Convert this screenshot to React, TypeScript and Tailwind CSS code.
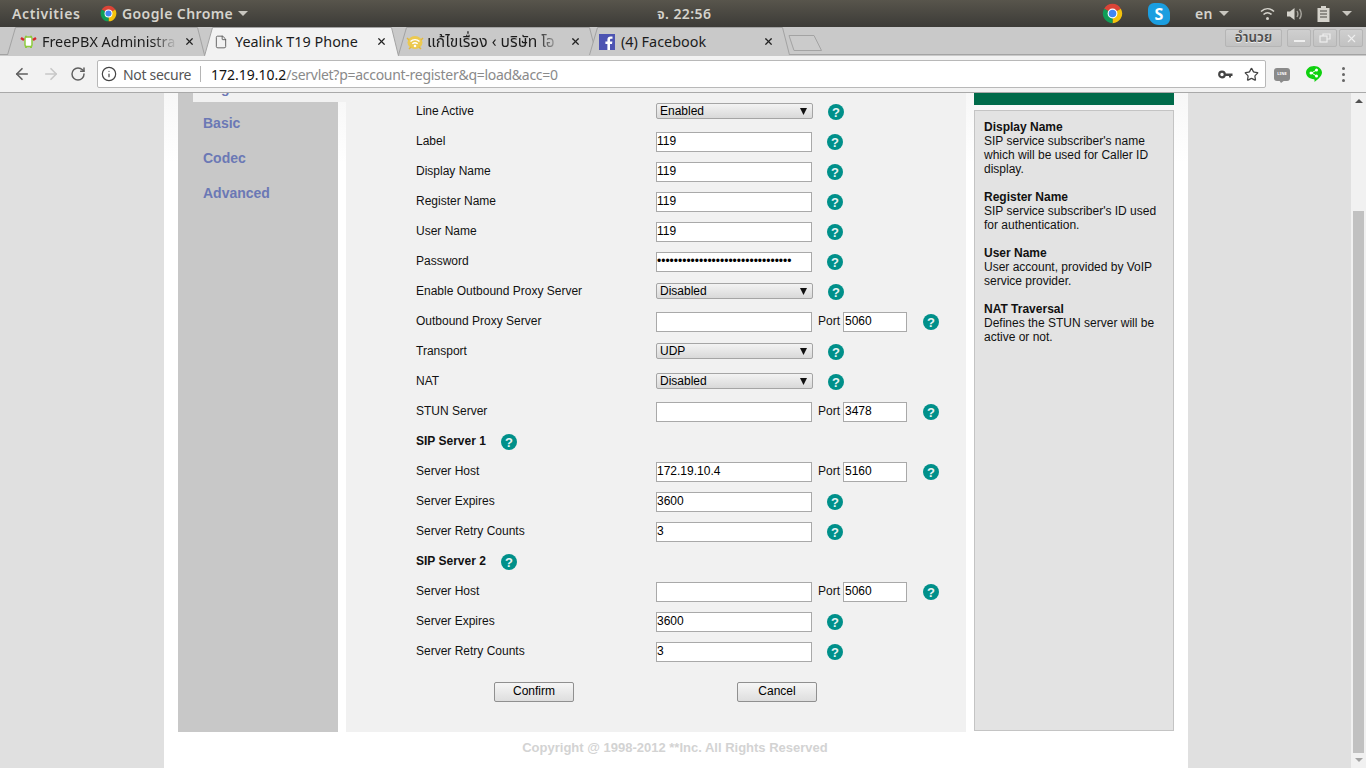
import { ArrowLeft, ArrowRight, File, Info, RotateCw, Star, X } from "lucide-react";
import type { ReactNode } from "react";

const uiFont = "font-['Noto_Sans','Noto_Sans_Thai','Loma',sans-serif]";

// เส้นขอบแท็บ คำนวณจากความกว้าง
const TabShape = ({ width, active }: { width: number; active?: boolean }) => (
  <svg className="absolute inset-0" width={width} height={29} viewBox={`0 0 ${width} 29`}>
    <path
      d={`M0.5 ${active ? 29 : 28} L8.5 0.5 L${width - 7.5} 0.5 L${width - 0.5} ${active ? 29 : 28}`}
      fill={active ? "#f2f2f2" : "#c9c9c9"}
      stroke="#a3a3a3"
    />
  </svg>
);

const ChromeLogo = ({ size }: { size: number }) => (
  <svg width={size} height={size} viewBox="0 0 24 24">
    <path d="M12 12 L2.47 6.5 A11 11 0 0 1 21.53 6.5Z" fill="#db4437" />
    <path d="M12 12 L21.53 6.5 A11 11 0 0 1 12 23Z" fill="#f4c20d" />
    <path d="M12 12 L12 23 A11 11 0 0 1 2.47 6.5Z" fill="#0f9d58" />
    <circle cx="12" cy="12" r="5.6" fill="#fff" />
    <circle cx="12" cy="12" r="4.3" fill="#4285f4" />
  </svg>
);

const Caret = () => (
  <svg width="10" height="5" viewBox="0 0 10 5">
    <path d="M0 0H10L5 5Z" fill="#c8c6bf" />
  </svg>
);

const TopBar = () => (
  <div className={`flex h-[27px] shrink-0 items-center bg-gradient-to-b from-[#58554c] to-[#3c3b37] text-[14px] font-semibold tracking-[0.4px] text-[#d5d3cc] ${uiFont}`}>
    <span className="ml-[12px] w-[88px] tracking-[0.6px]">Activities</span>
    <ChromeLogo size={17} />
    <span className="ml-[5px] w-[116px]">Google Chrome</span>
    <Caret />
    <span className="ml-[409px] w-[60px]">จ. 22:56</span>
    <div className="ml-[385px]">
      <ChromeLogo size={21} />
    </div>
    <div className="ml-[25px] flex h-[22px] w-[22px] items-center justify-center rounded-bl-[11px] rounded-br-[6px] rounded-tl-[6px] rounded-tr-[11px] bg-[#1b9ee0] text-[16px] font-bold text-white">S</div>
    <span className="ml-[25px]">en</span>
    <div className="ml-[6px]">
      <Caret />
    </div>
    <svg className="ml-[31px]" width="15" height="14" viewBox="0 0 15 14" fill="none" stroke="#d5d3cc" strokeWidth="1.6">
      <path d="M1 4.5C5 .8 10 .8 14 4.5" />
      <path d="M3.5 7.5C6 5.3 9 5.3 11.5 7.5" />
      <circle cx="7.5" cy="11.5" r="1.5" fill="#d5d3cc" stroke="none" />
    </svg>
    <svg className="ml-[12px]" width="16" height="14" viewBox="0 0 16 14">
      <path d="M0 4.5H3L7.5 1V13L3 9.5H0Z" fill="#d5d3cc" />
      <path d="M10 4C11.2 6 11.2 8 10 10M12.5 2C14.6 5 14.6 9 12.5 12" fill="none" stroke="#a8a69f" strokeWidth="1.4" />
    </svg>
    <svg className="ml-[14px]" width="13" height="16" viewBox="0 0 13 16">
      <path d="M4 0H9V2H12.5V16H.5V2H4Z" fill="#d5d3cc" />
      <path d="M3 5H10M3 8H10M3 11H10" stroke="#4a4842" strokeWidth="1.2" />
    </svg>
    <div className="ml-[12px]">
      <Caret />
    </div>
  </div>
);

interface TabProps {
  width: number;
  icon: ReactNode;
  title: string;
  active?: boolean;
  fade?: boolean;
  padLeft: number;
  iconGap: number;
  textWidth: number;
  closeRight: number;
  className?: string;
  titleClass?: string;
}

const Tab = ({ width, icon, title, active, fade, padLeft, iconGap, textWidth, closeRight, className, titleClass }: TabProps) => (
  <div className={`relative h-[29px] shrink-0 ${active ? "z-10" : ""} ${className ?? ""}`} style={{ width }}>
    <TabShape width={width} active={active} />
    <div className="relative flex h-[29px] items-center" style={{ paddingLeft: padLeft }}>
      <div className="flex w-[18px] shrink-0 justify-center">{icon}</div>
      <span
        className={`overflow-hidden whitespace-nowrap text-[#1c1c1c] ${titleClass ?? "text-[14.4px]"} ${fade ? "[mask-image:linear-gradient(to_right,#000_82%,transparent)]" : ""}`}
        style={{ marginLeft: iconGap, width: textWidth }}
      >
        {title}
      </span>
      <X className="absolute top-[9px] text-[#222]" style={{ right: closeRight }} size={11} strokeWidth={2.6} />
    </div>
  </div>
);

const WinButton = ({ children, w }: { children: ReactNode; w: string }) => (
  <div className={`flex h-[18px] items-center justify-center rounded-[2px] border border-[#b5b5b5] bg-gradient-to-b from-[#cfcfcf] to-[#c2c2c2] ${w}`}>
    {children}
  </div>
);

const TabStrip = () => (
  <div className={`relative flex h-[29px] shrink-0 items-start bg-[#c9c9c9] pl-[7px] ${uiFont}`}>
    <div className="absolute inset-x-0 bottom-[1px] h-px bg-[#a3a3a3]" />
    <Tab
      width={198}
      title="FreePBX Administra"
      fade
      padLeft={12}
      iconGap={5}
      textWidth={135}
      closeRight={10}
      icon={
        <svg width="17" height="13" viewBox="0 0 17 13">
          <rect x="5" y="2" width="7" height="9.500" rx="1.500" fill="#fff" stroke="#8ecb3e" strokeWidth="1.500" />
          <path d="M5 1.500H7M10 1.500H12M5 12.500H7M10 12.500H12" stroke="#8ecb3e" strokeWidth="1.500" />
          <path d="M1 3L4 5M16 3L13 5" stroke="#d8262c" strokeWidth="2.400" />
        </svg>
      }
    />
    <Tab
      width={195}
      className="-ml-[1px]"
      title="Yealink T19 Phone"
      active
      padLeft={8}
      iconGap={5}
      textWidth={128}
      closeRight={12}
      icon={<File className="text-[#555]" size={14} strokeWidth={1.5} />}
    />
    <Tab
      width={199}
      className="-ml-[1px]"
      title="แก้ไขเรื่อง ‹ บริษัท โอ"
      fade
      padLeft={8}
      iconGap={3}
      textWidth={134}
      closeRight={16}
      titleClass="text-[15.600px]"
      icon={
        <svg width="18" height="16" viewBox="0 0 18 16">
          <ellipse cx="9" cy="8.500" rx="7.500" ry="6.500" fill="#ecc94f" />
          <path d="M1 4L3 6M17 4L15 6M3 15L5 13M15 15L13 13" stroke="#e3b93c" strokeWidth="1.500" />
          <path d="M4.500 7.500C7 5 11 5 13.500 7.500M6.300 9.800C8 8.500 10 8.500 11.700 9.800" fill="none" stroke="#fff" strokeWidth="1.400" />
          <circle cx="9" cy="12" r="1.300" fill="#fff" />
        </svg>
      }
    />
    <Tab
      width={201}
      className="-ml-[8px]"
      title="(4) Facebook"
      padLeft={9}
      iconGap={5}
      textWidth={120}
      closeRight={16}
      icon={
        <svg width="16" height="16" viewBox="0 0 16 16">
          <rect width="16" height="16" fill="#4d54b2" />
          <path d="M11 16V10H13L13.4 7.5H11V6C11 5.2 11.3 4.8 12.2 4.8H13.5V2.6C13 2.5 12.3 2.5 11.6 2.5C9.7 2.5 8.4 3.6 8.4 5.7V7.5H6.4V10H8.4V16Z" fill="#fff" />
        </svg>
      }
    />
    <svg className="-ml-[2px] mt-[7px] shrink-0" width="35" height="18" viewBox="0 0 35 18">
      <path d="M1 1.5H26L33.5 16.5H6Z" fill="#cbcbcb" stroke="#a3a3a3" strokeLinejoin="round" />
    </svg>
    <div className="ml-auto mr-[3px] mt-[2px] flex gap-[2px]">
      <WinButton w="w-[57px] mr-[3px]">
        <span className="text-[13.500px] font-semibold leading-none text-[#4d4d4d] [text-shadow:0_1px_0_#eee]">อำนวย</span>
      </WinButton>
      <WinButton w="w-[24px]">
        <div className="mt-[6px] h-[2px] w-[11px] bg-[#eee]" />
      </WinButton>
      <WinButton w="w-[24px]">
        <svg width="12" height="10" viewBox="0 0 12 10" fill="none" stroke="#eee" strokeWidth="1.2">
          <rect x="1" y="3" width="7" height="6" />
          <path d="M4 3V1H11V6H8" />
        </svg>
      </WinButton>
      <WinButton w="w-[24px]">
        <X className="text-[#eee]" size={13} strokeWidth={2} />
      </WinButton>
    </div>
  </div>
);

const Toolbar = () => (
  <div className={`flex h-[37px] shrink-0 items-center border-b border-[#a9a9a9] bg-[#f2f2f2] ${uiFont}`}>
    <ArrowLeft className="ml-[13px] text-[#5f5f5f]" size={18} strokeWidth={2.2} />
    <ArrowRight className="ml-[11px] text-[#c8c8c8]" size={18} strokeWidth={2.2} />
    <RotateCw className="ml-[10px] text-[#5f5f5f]" size={16} strokeWidth={2.2} />
    <div className="ml-[11px] flex h-[28px] w-[1169px] items-center rounded-[2px] border border-[#b8b8b8] bg-white text-[14px]">
      <Info className="ml-[3px] text-[#444]" size={16} strokeWidth={1.8} />
      <span className="ml-[6px] w-[69px] whitespace-nowrap tracking-[-0.3px] text-[#555]">Not secure</span>
      <div className="ml-[8px] h-[16px] w-px bg-[#b5b5b5]" />
      <span className="ml-[10px] whitespace-nowrap text-[#111]">172.19.10.2</span>
      <span className="whitespace-nowrap tracking-[-0.28px] text-[#8a8a8a]">/servlet?p=account-register&amp;q=load&amp;acc=0</span>
      <svg className="ml-auto" width="15" height="9" viewBox="0 0 15 9">
        <circle cx="4" cy="4.5" r="2.8" fill="none" stroke="#444" strokeWidth="2.2" />
        <path d="M7 3.5H14.5V6H13V7.5H11V6H7Z" fill="#444" />
      </svg>
      <Star className="ml-[11px] mr-[6px] text-[#444]" size={15} strokeWidth={2} />
    </div>
    <div className="relative ml-[8px]">
      <div className="flex h-[13px] w-[16px] items-center justify-center rounded-[3px] bg-[#8a8a8a] text-[4px] font-bold text-white">LINE</div>
      <svg className="absolute left-[5px] top-[12px]" width="6" height="3" viewBox="0 0 6 3">
        <path d="M0 0H6L2 3Z" fill="#8a8a8a" />
      </svg>
    </div>
    <svg className="ml-[16px]" width="16" height="16" viewBox="0 0 16 16">
      <path d="M8 0C12.4 0 16 2.9 16 6.6C16 10.2 11.5 14 8.5 16C8.7 14.5 8.6 13.2 8 13.2C3.6 13.2 0 10.300 0 6.600C0 2.900 3.600 0 8 0Z" fill="#0fd10f" />
      <path d="M5.500 7L10.500 4M5.500 7L10.500 10" stroke="#fff" strokeWidth="1" />
      <circle cx="5" cy="7" r="1.500" fill="#fff" />
      <circle cx="10.500" cy="4" r="1.500" fill="#fff" />
      <circle cx="10.500" cy="10" r="1.500" fill="#fff" />
    </svg>
    <div className="ml-[20px] flex flex-col gap-[3px]">
      <div className="h-[3px] w-[3px] rounded-full bg-[#666]" />
      <div className="h-[3px] w-[3px] rounded-full bg-[#666]" />
      <div className="h-[3px] w-[3px] rounded-full bg-[#666]" />
    </div>
  </div>
);

const Help = ({ className }: { className?: string }) => (
  <div className={`flex h-[16px] w-[16px] shrink-0 items-center justify-center rounded-full bg-[#00908a] text-[13px] font-bold leading-none text-[#e8f5f4] ${className ?? ""}`}>
    ?
  </div>
);

const TextBox = ({ value, type, w }: { value?: string; type?: string; w: string }) => (
  <input
    type={type ?? "text"}
    defaultValue={value}
    className={`mt-[2px] h-[20px] border border-[#a9a9a9] bg-white pb-[2px] text-[12px] text-black outline-none ${w}`}
  />
);

const SelectBox = ({ value }: { value: string }) => (
  <div className="relative h-[16px] w-[157px]">
    <select
      defaultValue={value}
      className="block h-[16px] w-full appearance-none rounded-[2px] border border-[#a5a5a5] bg-gradient-to-b from-[#f3f3f3] to-[#d9d9d9] pb-[1px] pl-[3px] text-[12px] leading-none text-black outline-none"
    >
      <option>{value}</option>
    </select>
    <svg className="absolute right-[6px] top-[5px]" width="7" height="7" viewBox="0 0 7 7">
      <path d="M0 0H7L3.500 7Z" fill="#111" />
    </svg>
  </div>
);

const Row = ({ label, children }: { label: string; children: ReactNode }) => (
  <div className="flex h-[30px] items-center">
    <span className="w-[240px] shrink-0">{label}</span>
    {children}
  </div>
);

const InputRow = ({ label, value, type }: { label: string; value?: string; type?: string }) => (
  <Row label={label}>
    <TextBox value={value} type={type} w="w-[156px]" />
    <Help className="ml-[15px] mt-[2px]" />
  </Row>
);

const SelectRow = ({ label, value }: { label: string; value: string }) => (
  <Row label={label}>
    <SelectBox value={value} />
    <Help className="ml-[15px] mt-[2px]" />
  </Row>
);

const PortRow = ({ label, host, port }: { label: string; host?: string; port: string }) => (
  <Row label={label}>
    <TextBox value={host} w="w-[156px]" />
    <span className="ml-[6px] w-[25px]">Port</span>
    <TextBox value={port} w="w-[64px] pl-[1px]" />
    <Help className="ml-[16px] mt-[2px]" />
  </Row>
);

const SectionRow = ({ label }: { label: string }) => (
  <div className="flex h-[30px] items-center">
    <span className="w-[85px] shrink-0 font-bold">{label}</span>
    <Help className="mt-[2px]" />
  </div>
);

const ActionButton = ({ children }: { children: string }) => (
  <button className="h-[20px] w-[80px] rounded-[2px] border border-[#909090] bg-gradient-to-b from-[#f6f6f6] to-[#dedede] pb-[2px] text-[12px] leading-none text-black">
    {children}
  </button>
);

const AccountForm = () => (
  <main className="h-[639px] w-[620px] shrink-0 bg-[#f1f1f1] pl-[70px] pt-[3px] text-[12px] text-[#111]">
    <SelectRow label="Line Active" value="Enabled" />
    <InputRow label="Label" value="119" />
    <InputRow label="Display Name" value="119" />
    <InputRow label="Register Name" value="119" />
    <InputRow label="User Name" value="119" />
    <InputRow label="Password" type="password" value="12345678901234567890123456789012" />
    <SelectRow label="Enable Outbound Proxy Server" value="Disabled" />
    <PortRow label="Outbound Proxy Server" port="5060" />
    <SelectRow label="Transport" value="UDP" />
    <SelectRow label="NAT" value="Disabled" />
    <PortRow label="STUN Server" port="3478" />
    <SectionRow label="SIP Server 1" />
    <PortRow label="Server Host" host="172.19.10.4" port="5160" />
    <InputRow label="Server Expires" value="3600" />
    <InputRow label="Server Retry Counts" value="3" />
    <SectionRow label="SIP Server 2" />
    <PortRow label="Server Host" port="5060" />
    <InputRow label="Server Expires" value="3600" />
    <InputRow label="Server Retry Counts" value="3" />
    <div className="ml-[78px] mt-[16px] flex gap-[163px]">
      <ActionButton>Confirm</ActionButton>
      <ActionButton>Cancel</ActionButton>
    </div>
  </main>
);

const helpItems = [
  { title: "Display Name", text: "SIP service subscriber's name which will be used for Caller ID display." },
  { title: "Register Name", text: "SIP service subscriber's ID used for authentication." },
  { title: "User Name", text: "User account, provided by VoIP service provider." },
  { title: "NAT Traversal", text: "Defines the STUN server will be active or not." },
];

const HelpPanel = () => (
  <aside className="ml-[8px] flex h-[638px] w-[200px] shrink-0 flex-col">
    <div className="h-[12px] shrink-0 bg-[#006b4a]" />
    <div className="mt-[5px] flex flex-1 flex-col gap-[14px] border border-[#c4c4c4] bg-[#e3e3e3] px-[9px] pt-[9px] text-[12px] leading-[14px] text-[#111]">
      {helpItems.map((item) => (
        <div key={item.title}>
          <div className="font-bold">{item.title}</div>
          <div>{item.text}</div>
        </div>
      ))}
    </div>
  </aside>
);

const SideNav = () => (
  <nav className="flex w-[168px] shrink-0 flex-col text-[14px] font-bold text-[#6b78b5]">
    <div className="flex h-[9px] shrink-0">
      <div className="w-[15px] bg-[#c8c8c8]" />
      <div className="flex-1 overflow-hidden bg-[#f1f1f1] pl-[10px]">
        <div className="-mt-[15px] h-[20px] leading-[20px]">Register</div>
      </div>
    </div>
    <div className="flex w-[160px] flex-1 flex-col bg-[#c8c8c8] pl-[25px] pt-[4px]">
      <div className="h-[35px] leading-[35px]">Basic</div>
      <div className="h-[35px] leading-[35px]">Codec</div>
      <div className="h-[35px] leading-[35px]">Advanced</div>
    </div>
  </nav>
);

const Scrollbar = () => (
  <div className="flex w-[15px] shrink-0 flex-col items-center bg-[#f1f1f1] pt-[6px]">
    <svg width="8" height="4" viewBox="0 0 8 4">
      <path d="M0 4H8L4 0Z" fill="#505050" />
    </svg>
    <div className="mt-[108px] h-[542px] w-[11px] bg-[#c1c1c1]" />
    <svg className="mt-[5px]" width="8" height="4" viewBox="0 0 8 4">
      <path d="M0 0H8L4 4Z" fill="#a3a3a3" />
    </svg>
  </div>
);

export default function App() {
  return (
    <div className="flex h-[768px] w-[1366px] flex-col overflow-hidden font-['Liberation_Sans',Arial,sans-serif]">
      <TopBar />
      <TabStrip />
      <Toolbar />
      <div className="flex min-h-0 flex-1 bg-[#e0e0e0]">
        <div className="ml-[164px] flex w-[1024px] shrink-0 flex-col bg-[linear-gradient(#f7f7f7,#fff_70px)] px-[14px]">
          <div className="flex">
            <SideNav />
            <AccountForm />
            <HelpPanel />
          </div>
          <p className="mt-[8px] pr-[2px] text-center text-[13px] font-bold leading-[15px] text-[#d3d3d3]">
            Copyright @ 1998-2012 **Inc. All Rights Reserved
          </p>
        </div>
        <div className="flex-1" />
        <Scrollbar />
      </div>
    </div>
  );
}
